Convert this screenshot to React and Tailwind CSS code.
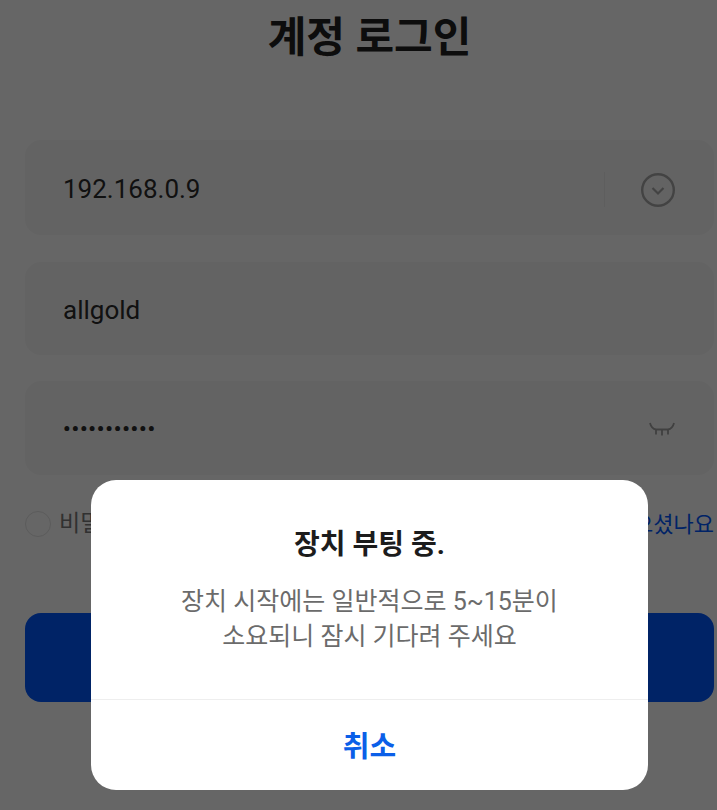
const font = "font-['Roboto','Noto_Sans_CJK_KR',sans-serif]";

const ChevronCircle = () => (
  <svg width="36" height="36" viewBox="0 0 36 36" fill="none" className="text-[#a8a8a8]">
    <circle cx="18" cy="18" r="15.8" stroke="currentColor" strokeWidth="2.4" />
    <path d="M12.5 16l5.5 5.5 5.5-5.5" stroke="currentColor" strokeWidth="2.2" />
  </svg>
);

const ClosedEye = () => (
  <svg width="28" height="18" viewBox="0 0 28 18" fill="none" className="text-[#a0a0a0]">
    <path d="M2 2c1 4 3 6 6 6.500h12c3-.5 5-2.500 6-6.500" stroke="currentColor" strokeWidth="1.8" />
    <path d="M8 8.500v5M14 8.500v6M20 8.500v5" stroke="currentColor" strokeWidth="1.8" />
  </svg>
);

const Field = ({ className, children }) => (
  <div className={`flex items-center bg-[#f8f8f8] rounded-2xl pl-[38px] pr-[38px] pt-[4px] text-[26px] text-[#2b2b2b] ${className}`}>
    {children}
  </div>
);

export default function App() {
  return (
    <div className={`relative h-[810px] w-full overflow-hidden bg-white ${font}`}>
      <div className="pl-[25px] pr-[3px]">
        <h1 className="pt-[11px] text-center text-[42px] leading-[54px] font-bold text-[#222]">계정 로그인</h1>

        <Field className="mt-[75px] h-[95px] justify-between">
          <span>192.168.0.9</span>
          <div className="flex items-center gap-[35px]">
            <div className="h-[35px] w-px bg-[#ececec]" />
            <ChevronCircle />
          </div>
        </Field>

        <Field className="mt-[27px] h-[93px]">allgold</Field>

        <Field className="mt-[26px] h-[94px] justify-between">
          <span className="text-[21px] tracking-[0.9px] font-bold">•••••••••••</span>
          <ClosedEye />
        </Field>

        <div className="mt-[35px] flex h-[28px] items-center justify-between text-[23px] text-[#7a7a7a]">
          <div className="flex items-center gap-[8px]">
            <div className="h-[26px] w-[26px] rounded-full border border-[#e4e4e4]" />
            <span>비밀번호 저장</span>
          </div>
          <span className="text-[22px] text-[#0057ff]">비밀번호를 잊으셨나요</span>
        </div>

        <button aria-label="로그인" className="mt-[75px] h-[89px] w-full rounded-2xl bg-[#0057ff]" />
      </div>

      <div className="absolute inset-0 bg-black/60" />

      <div className="absolute left-[91px] top-[480px] flex h-[310px] w-[557px] flex-col rounded-[25px] bg-white">
        <div className="h-[220px] border-b border-[#eeeeee] text-center">
          <h2 className="pt-[44px] text-[28px] leading-[42px] font-bold text-[#1c1c1c]">장치 부팅 중.</h2>
          <p className="mt-[18px] text-[25px] leading-[35px] text-[#6b6b6b]">
            장치 시작에는 일반적으로 5~15분이<br />소요되니 잠시 기다려 주세요
          </p>
        </div>
        <button className="flex-1 pt-[6px] text-[29px] font-bold text-[#0b5fe8]">취소</button>
      </div>
    </div>
  );
}
